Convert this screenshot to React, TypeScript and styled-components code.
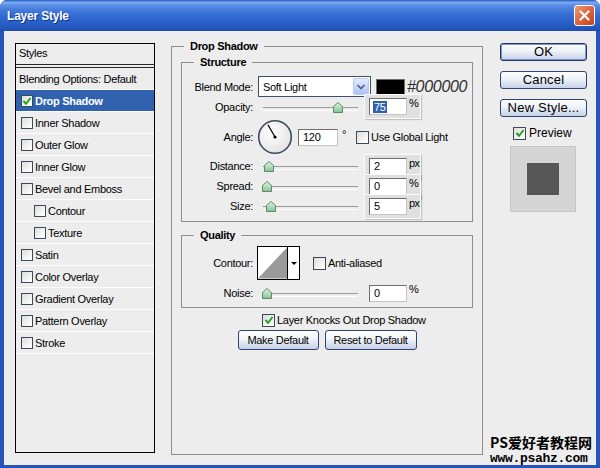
import React from 'react';
import styled, { createGlobalStyle } from 'styled-components';

const GlobalStyle = createGlobalStyle`
  * { box-sizing: border-box; }
  html, body { margin: 0; padding: 0; background: #ffffff; }
  body {
    font-family: "Liberation Sans", Arial, sans-serif;
    font-size: 11px;
    letter-spacing: -0.3px;
    color: #000;
  }
`;

const Window = styled.div`
  position: relative;
  width: 600px;
  height: 468px;
  display: flex;
  flex-direction: column;
  overflow: hidden;
  background: #2754b8;
  border-radius: 7px 7px 0 0;
`;

const TitleBar = styled.div`
  height: 31px;
  flex: none;
  display: flex;
  align-items: center;
  justify-content: space-between;
  padding: 0 5px 0 7px;
  background: linear-gradient(#2459c4 0%, #7eaaf0 8%, #5b90e6 16%, #3f78da 35%, #2d66cf 60%, #2659c2 85%, #1f4db0 100%);
`;

const TitleText = styled.span`
  color: #fff;
  font-weight: bold;
  font-size: 12px;
  letter-spacing: -0.2px;
  text-shadow: 1px 1px 0 #12338a;
`;

const CloseButton = styled.span`
  width: 21px;
  height: 21px;
  display: flex;
  align-items: center;
  justify-content: center;
  border: 1px solid #fff;
  border-radius: 3px;
  background: linear-gradient(135deg, #eb9b7c 0%, #dc6a44 45%, #c4421c 100%);
`;

const Body = styled.div`
  flex: 1;
  margin: 0 4px 3px;
  padding: 12px 9px 0 11px;
  background: #ededed;
  display: flex;
  align-items: flex-start;
`;

/* ---------- left styles list ---------- */

const StyleList = styled.div`
  flex: none;
  width: 140px;
  height: 410px;
  border: 1px solid #000;
  display: flex;
  flex-direction: column;
`;

const ListHeader = styled.div`
  height: 24px;
  padding-left: 3px;
  line-height: 19px;
  border-bottom: 4px double #2a2a2a;
`;

const StyleRow = styled.div<{ $selected?: boolean; $indent?: boolean; $plain?: boolean }>`
  height: 22px;
  display: flex;
  align-items: center;
  gap: 2px;
  padding-left: ${p => (p.$plain ? 3 : p.$indent ? 18 : 5)}px;
  border-bottom: 1px solid #ffffff;
  background: ${p => (p.$selected ? '#3062b0' : 'transparent')};
  color: ${p => (p.$selected ? '#fff' : '#000')};
  font-weight: ${p => (p.$selected ? 'bold' : 'normal')};
`;

const CheckBox = styled.span<{ $size?: number }>`
  flex: none;
  width: ${p => p.$size ?? 12}px;
  height: ${p => p.$size ?? 12}px;
  display: inline-flex;
  align-items: center;
  justify-content: center;
  border: 1px solid #3a4a5c;
  background: linear-gradient(135deg, #dcdcd6 0%, #f4f4f1 60%, #ffffff 100%);
`;

/* ---------- group boxes ---------- */

const Group = styled.fieldset`
  margin: 0;
  min-width: 0;
  padding: 0;
  border: 1px solid #8e8e8e;
`;

const MainGroup = styled(Group)`
  flex: none;
  width: 312px;
  height: 415px;
  margin: -3px 17px 0 16px;
  padding: 3px 9px 0;
`;

const StructureGroup = styled(Group)`
  padding: 7px 0 5px;
`;

const QualityGroup = styled(Group)`
  margin-top: 7px;
  padding: 4px 0 5px;
`;

const Legend = styled.legend<{ $offset: number }>`
  margin-left: ${p => p.$offset}px;
  padding: 0 6px;
  font-weight: bold;
  line-height: 13px;
`;

const FieldRow = styled.div<{ $h: number; $mt?: number }>`
  display: flex;
  align-items: center;
  height: ${p => p.$h}px;
  margin-top: ${p => p.$mt ?? 0}px;
`;

const FieldLabel = styled.span`
  flex: none;
  width: 71px;
  margin-right: 5px;
  text-align: right;
`;

const Select = styled.div`
  flex: none;
  width: 113px;
  height: 21px;
  display: flex;
  align-items: center;
  justify-content: space-between;
  padding: 0 1px 0 4px;
  background: #fff;
  border: 1px solid #3d4d6b;
`;

const SelectButton = styled.span`
  width: 16px;
  height: 17px;
  display: flex;
  align-items: center;
  justify-content: center;
  border: 1px solid #b7caf2;
  border-radius: 2px;
  background: linear-gradient(#e4ecfd, #c2d4f7 60%, #adc3f1);
`;

const Swatch = styled.span`
  flex: none;
  width: 29px;
  height: 16px;
  margin-left: 5px;
  background: #000;
  border: 1px solid #6d6d6d;
`;

const HexText = styled.span`
  margin-left: 2px;
  font-size: 16px;
  font-style: italic;
  color: #2d2d2d;
`;

const SliderBox = styled.div`
  position: relative;
  flex: none;
  width: 102px;
  height: 14px;

  &::before {
    content: '';
    position: absolute;
    left: 5px;
    right: 2px;
    top: 7px;
    height: 2px;
    border-top: 1px solid #9b9b9b;
    border-bottom: 1px solid #ffffff;
  }
`;

const Thumb = styled.svg`
  position: absolute;
  top: 2px;
  width: 10px;
  height: 11px;
`;

const InputWell = styled.span`
  display: flex;
  align-items: center;
  margin-left: 4px;
  padding: 3px 1px 3px 4px;
  background: #e0e0e0;
  border: 1px solid #fbfbfb;
  box-shadow: 1px 1px 1px rgba(0, 0, 0, 0.18);
`;

const NumField = styled.span<{ $w: number; $ml?: number }>`
  flex: none;
  width: ${p => p.$w}px;
  height: 17px;
  margin-left: ${p => p.$ml ?? 0}px;
  display: flex;
  align-items: center;
  padding-left: 4px;
  background: #fff;
  border: 1px solid #6f6f6f;
  border-right-color: #c4c4c4;
  border-bottom-color: #c4c4c4;
`;

const SelectedText = styled.span`
  background: #2f5fae;
  color: #fff;
  padding: 0 1px;
  margin-left: -1px;
`;

const Unit = styled.span`
  flex: none;
  width: 10px;
  margin-left: 2px;
  white-space: nowrap;
  align-self: flex-start;
  margin-top: -1px;
  letter-spacing: -0.5px;
`;

const Dial = styled.svg`
  flex: none;
  width: 36px;
  height: 36px;
  margin-left: -1px;
`;

const Degree = styled.span`
  margin-left: 4px;
  margin-top: -6px;
`;

const InlineLabel = styled.span`
  margin-left: 2px;
  white-space: nowrap;
`;

const Spacer = styled.span<{ $w: number }>`
  flex: none;
  width: ${p => p.$w}px;
`;

const ContourPicker = styled.div`
  flex: none;
  display: flex;
  width: 43px;
  height: 34px;
  margin-left: -1px;
  background: #fff;
  border: 1px solid #000;
`;

const ContourArrow = styled.span`
  flex: none;
  width: 12px;
  display: flex;
  align-items: center;
  justify-content: center;
  border-left: 1px solid #000;

  &::after {
    content: '';
    border-left: 3px solid transparent;
    border-right: 3px solid transparent;
    border-top: 3px solid #000;
  }
`;

const KnockRow = styled.div`
  display: flex;
  align-items: center;
  height: 14px;
  margin-top: 5px;
  padding-left: 81px;
`;

const ButtonRow = styled.div`
  display: flex;
  justify-content: center;
  gap: 6px;
  margin-top: 3px;
`;

const SmallButton = styled.button<{ $w: number }>`
  width: ${p => p.$w}px;
  height: 20px;
  padding: 0;
  font-family: inherit;
  font-size: 11px;
  letter-spacing: -0.3px;
  color: #000;
  border: 1px solid #2c4470;
  border-radius: 3px;
  background: linear-gradient(#fefefe, #f0f3f8 45%, #c6d0e4);
`;

/* ---------- right column ---------- */

const SideColumn = styled.div`
  flex: none;
  width: 87px;
  display: flex;
  flex-direction: column;
`;

const SideButton = styled.button<{ $default?: boolean }>`
  height: 18px;
  margin-bottom: 10px;
  padding: 0;
  font-family: inherit;
  font-size: 13px;
  letter-spacing: 0.2px;
  line-height: 14px;
  color: #000;
  border: ${p => (p.$default ? '1px solid #1f3666' : '1px solid #2c4470')};
  box-shadow: ${p => (p.$default ? 'inset 0 0 0 1px #7d97c8' : 'none')};
  border-radius: 3px;
  background: linear-gradient(#fefefe, #eef2f8 45%, #c5d1e6);
`;

const PreviewRow = styled.div`
  display: flex;
  align-items: center;
  height: 12px;
  padding-left: 13px;
`;

const PreviewLabel = styled.span`
  margin-left: 3px;
  font-size: 12px;
  letter-spacing: 0;
`;

const PreviewBox = styled.div`
  width: 66px;
  height: 66px;
  margin: 7px 0 0 10px;
  display: flex;
  align-items: center;
  justify-content: center;
  background: #d5d5d5;
  border: 1px solid #c6c6c6;
`;

const PreviewSquare = styled.div`
  width: 32px;
  height: 32px;
  background: #575757;
`;

const Watermark = styled.div`
  position: absolute;
  right: 8px;
  bottom: 3px;
  display: flex;
  flex-direction: column;
  align-items: flex-start;
  gap: 2px;
  font-weight: bold;
  letter-spacing: 0;
`;

const WatermarkCn = styled.span`
  font-family: "Noto Sans CJK SC", "Liberation Sans", sans-serif;
  font-size: 14px;
  line-height: 15px;
`;

const WatermarkUrl = styled.span`
  font-family: "Liberation Mono", monospace;
  font-size: 13px;
  line-height: 13px;
  letter-spacing: -0.3px;
`;

/* ---------- small drawings ---------- */

const Tick = () => (
  <svg width="10" height="10" viewBox="0 0 10 10">
    <path d="M1.5 5 L4 7.8 L8.6 2" fill="none" stroke="#22a022" strokeWidth="2" />
  </svg>
);

const CloseX = () => (
  <svg width="11" height="11" viewBox="0 0 11 11">
    <path d="M1.5 1.5 L9.5 9.5 M9.5 1.5 L1.5 9.5" stroke="#fff" strokeWidth="2.2" strokeLinecap="round" />
  </svg>
);

const Chevron = () => (
  <svg width="10" height="8" viewBox="0 0 10 8">
    <path d="M1.5 2 L5 5.5 L8.5 2" fill="none" stroke="#4a5f88" strokeWidth="1.6" />
  </svg>
);

function Slider({ pos }: { pos: number }) {
  return (
    <SliderBox>
      <Thumb viewBox="0 0 10 11" style={{ left: 4 + pos * 95 }}>
        <defs>
          <linearGradient id="thumbFill" x1="0" y1="0" x2="0" y2="1">
            <stop offset="0" stopColor="#e3f4e5" />
            <stop offset="1" stopColor="#86c394" />
          </linearGradient>
        </defs>
        <path d="M0.5 4.5 L5 0.5 L9.5 4.5 V10.5 H0.5 Z" fill="url(#thumbFill)" stroke="#5d8b68" strokeWidth="1" />
      </Thumb>
    </SliderBox>
  );
}

function Check({ checked, size }: { checked?: boolean; size?: number }) {
  return <CheckBox $size={size}>{checked && <Tick />}</CheckBox>;
}

const styleItems: { name: string; indent?: boolean; checked?: boolean; selected?: boolean }[] = [
  { name: 'Drop Shadow', checked: true, selected: true },
  { name: 'Inner Shadow' },
  { name: 'Outer Glow' },
  { name: 'Inner Glow' },
  { name: 'Bevel and Emboss' },
  { name: 'Contour', indent: true },
  { name: 'Texture', indent: true },
  { name: 'Satin' },
  { name: 'Color Overlay' },
  { name: 'Gradient Overlay' },
  { name: 'Pattern Overlay' },
  { name: 'Stroke' },
];

export default function App() {
  return (
    <>
      <GlobalStyle />
      <Window>
        <TitleBar>
          <TitleText>Layer Style</TitleText>
          <CloseButton>
            <CloseX />
          </CloseButton>
        </TitleBar>

        <Body>
          <StyleList>
            <ListHeader>Styles</ListHeader>
            <StyleRow $plain>Blending Options: Default</StyleRow>
            {styleItems.map(item => (
              <StyleRow key={item.name} $selected={item.selected} $indent={item.indent}>
                <Check checked={item.checked} />
                {item.name}
              </StyleRow>
            ))}
          </StyleList>

          <MainGroup>
            <Legend $offset={3}>Drop Shadow</Legend>

            <StructureGroup>
              <Legend $offset={12}>Structure</Legend>

              <FieldRow $h={21}>
                <FieldLabel>Blend Mode:</FieldLabel>
                <Select>
                  Soft Light
                  <SelectButton>
                    <Chevron />
                  </SelectButton>
                </Select>
                <Swatch />
                <HexText>#000000</HexText>
              </FieldRow>

              <FieldRow $h={19}>
                <FieldLabel>Opacity:</FieldLabel>
                <Slider pos={0.75} />
                <InputWell>
                  <NumField $w={38}>
                    <SelectedText>75</SelectedText>
                  </NumField>
                  <Unit>%</Unit>
                </InputWell>
              </FieldRow>

              <FieldRow $h={36} $mt={3}>
                <FieldLabel>Angle:</FieldLabel>
                <Dial viewBox="0 0 36 36">
                  <defs>
                    <radialGradient id="dialFill" cx="0.4" cy="0.35" r="0.7">
                      <stop offset="0" stopColor="#ffffff" />
                      <stop offset="1" stopColor="#e2e2e2" />
                    </radialGradient>
                  </defs>
                  <circle cx="18" cy="18" r="16.3" fill="url(#dialFill)" stroke="#3b4a5c" strokeWidth="1.6" />
                  <line x1="18" y1="18" x2="11" y2="5.9" stroke="#000" strokeWidth="1.2" />
                  <circle cx="18" cy="18" r="1.6" fill="#000" />
                </Dial>
                <NumField $w={40} $ml={5}>120</NumField>
                <Degree>°</Degree>
                <Spacer $w={10} />
                <Check size={13} />
                <InlineLabel>Use Global Light</InlineLabel>
              </FieldRow>

              <FieldRow $h={20} $mt={1}>
                <FieldLabel>Distance:</FieldLabel>
                <Slider pos={0.02} />
                <InputWell>
                  <NumField $w={38}>2</NumField>
                  <Unit>px</Unit>
                </InputWell>
              </FieldRow>

              <FieldRow $h={20}>
                <FieldLabel>Spread:</FieldLabel>
                <Slider pos={0} />
                <InputWell>
                  <NumField $w={38}>0</NumField>
                  <Unit>%</Unit>
                </InputWell>
              </FieldRow>

              <FieldRow $h={20}>
                <FieldLabel>Size:</FieldLabel>
                <Slider pos={0.04} />
                <InputWell>
                  <NumField $w={38}>5</NumField>
                  <Unit>px</Unit>
                </InputWell>
              </FieldRow>
            </StructureGroup>

            <QualityGroup>
              <Legend $offset={12}>Quality</Legend>

              <FieldRow $h={34}>
                <FieldLabel>Contour:</FieldLabel>
                <ContourPicker>
                  <svg width="30" height="32" viewBox="0 0 30 32">
                    <polygon points="30,0 30,32 0,32" fill="#9a9a9a" />
                  </svg>
                  <ContourArrow />
                </ContourPicker>
                <Spacer $w={13} />
                <Check size={13} />
                <InlineLabel>Anti-aliased</InlineLabel>
              </FieldRow>

              <FieldRow $h={18} $mt={4}>
                <FieldLabel>Noise:</FieldLabel>
                <Slider pos={0} />
                <NumField $w={38} $ml={9}>0</NumField>
                <Unit>%</Unit>
              </FieldRow>
            </QualityGroup>

            <KnockRow>
              <Check checked size={13} />
              <InlineLabel>Layer Knocks Out Drop Shadow</InlineLabel>
            </KnockRow>

            <ButtonRow>
              <SmallButton $w={81}>Make Default</SmallButton>
              <SmallButton $w={92}>Reset to Default</SmallButton>
            </ButtonRow>
          </MainGroup>

          <SideColumn>
            <SideButton $default>OK</SideButton>
            <SideButton>Cancel</SideButton>
            <SideButton>New Style...</SideButton>
            <PreviewRow>
              <Check checked size={13} />
              <PreviewLabel>Preview</PreviewLabel>
            </PreviewRow>
            <PreviewBox>
              <PreviewSquare />
            </PreviewBox>
          </SideColumn>
        </Body>

        <Watermark>
          <WatermarkCn>PS爱好者教程网</WatermarkCn>
          <WatermarkUrl>www.psahz.com</WatermarkUrl>
        </Watermark>
      </Window>
    </>
  );
}
